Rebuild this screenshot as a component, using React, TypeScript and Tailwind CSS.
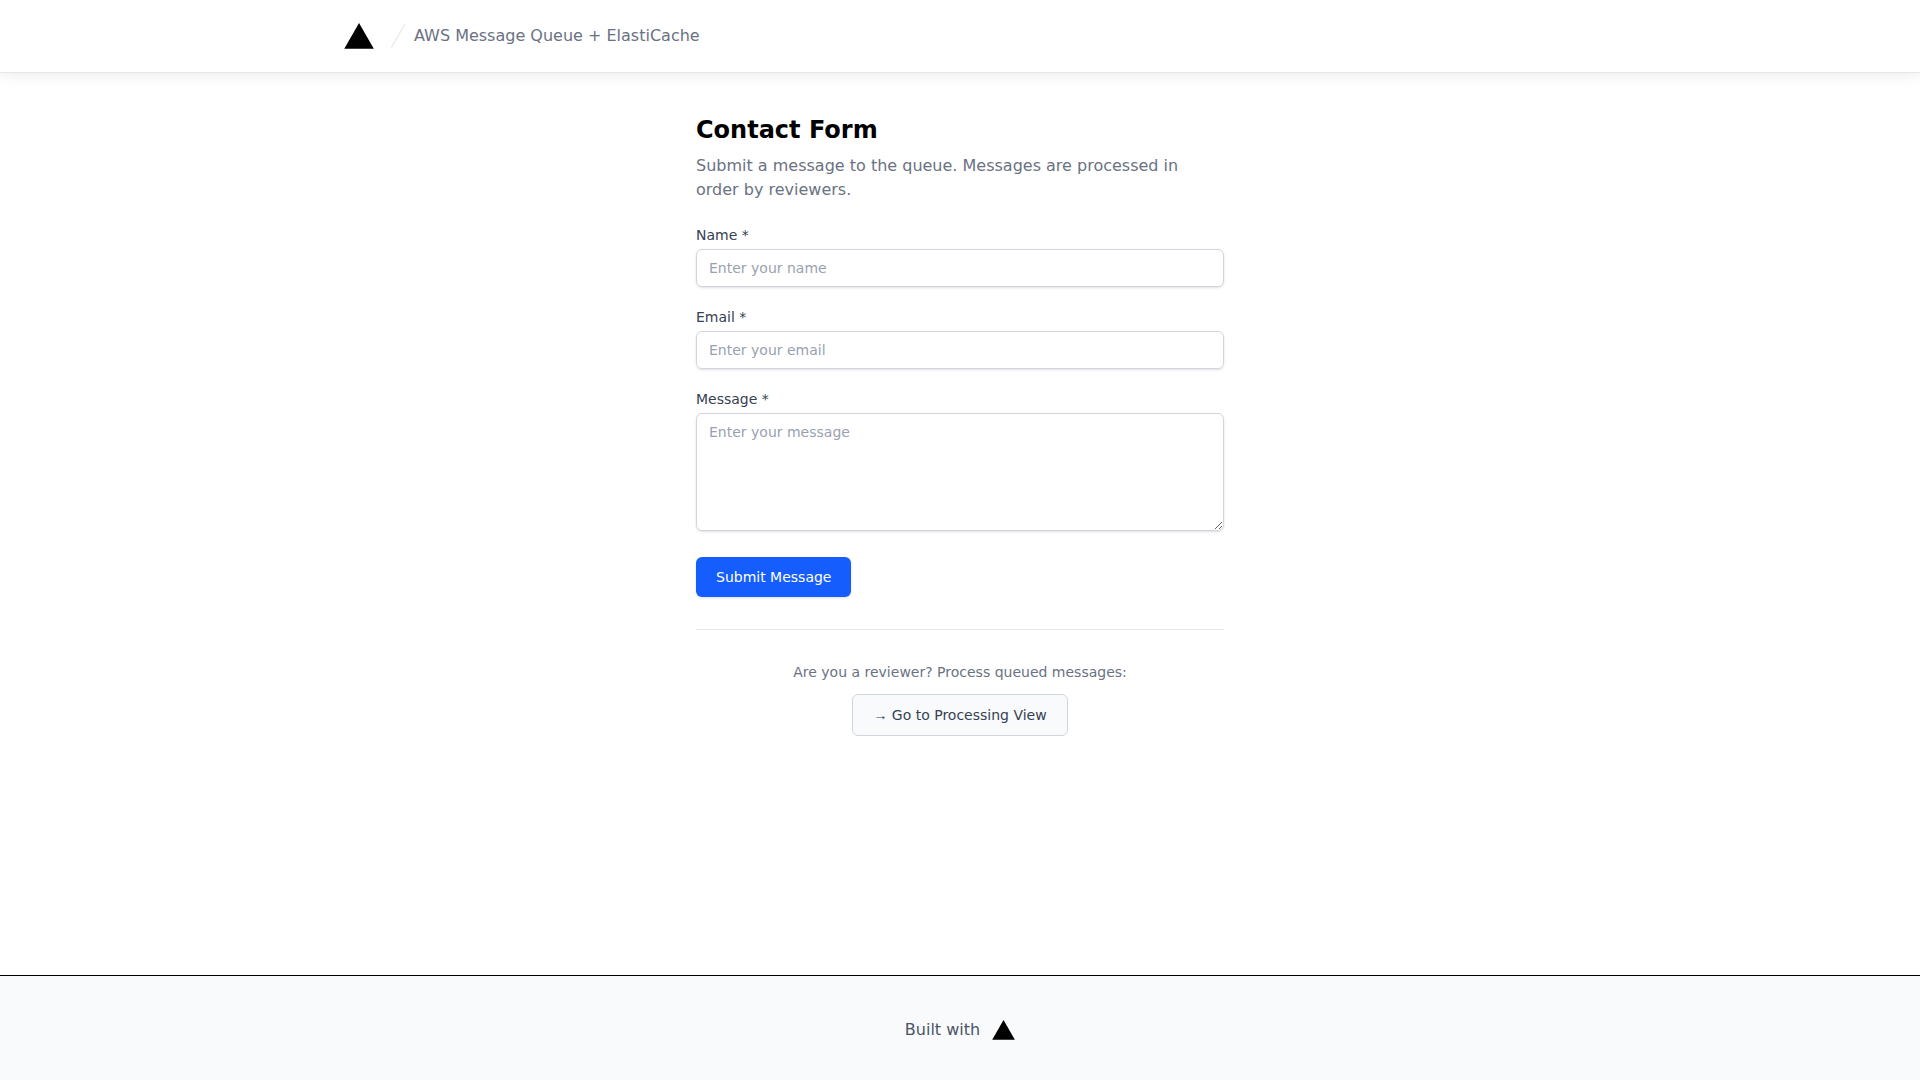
import React, { useState } from "react";

interface LogoProps {
  className?: string;
}

function Logo({ className }: LogoProps) {
  return (
    <svg className={className} viewBox="0 0 75 65" fill="#000" aria-hidden="true">
      <path d="M37.59.25l36.95 64H.64l36.95-64z" />
    </svg>
  );
}

function Navbar() {
  return (
    <header className="border-b border-gray-200 shadow-[0_0_15px_0_rgba(0,0,0,0.1)]">
      <div className="flex items-center max-w-7xl mx-auto px-6 py-5">
        <a href="#" aria-label="Home" className="mr-2">
          <Logo className="w-[30px] h-[26px]" />
        </a>
        <svg
          className="w-8 h-8 text-[#eaeaea]"
          viewBox="0 0 24 24"
          fill="none"
          stroke="currentColor"
          strokeWidth="1"
          strokeLinecap="round"
          strokeLinejoin="round"
          aria-hidden="true"
        >
          <path d="M16.88 3.549L7.12 20.451" />
        </svg>
        <span className="text-gray-500">AWS Message Queue + ElastiCache</span>
      </div>
    </header>
  );
}

function Footer() {
  return (
    <footer className="flex items-center justify-center border-t border-black bg-gray-50 pt-[42px] pb-[38px]">
      <span className="text-gray-600">Built with</span>
      <a href="#" aria-label="Vercel" className="ml-3">
        <Logo className="w-[23px] h-5" />
      </a>
    </footer>
  );
}

const labelClass = "block text-sm font-medium text-gray-700";
const inputClass =
  "mt-1 block w-full rounded-md border border-gray-300 px-3 py-2 text-sm shadow-sm placeholder:text-gray-400 focus:outline-none focus:ring-2 focus:ring-blue-500";

function ContactForm() {
  const [name, setName] = useState("");
  const [email, setEmail] = useState("");
  const [message, setMessage] = useState("");

  const handleSubmit = (e: React.FormEvent) => {
    e.preventDefault();
    setName("");
    setEmail("");
    setMessage("");
  };

  return (
    <form onSubmit={handleSubmit} className="mt-[23px] space-y-5">
      <div>
        <label htmlFor="name" className={labelClass}>
          Name *
        </label>
        <input
          id="name"
          type="text"
          required
          value={name}
          onChange={(e) => setName(e.target.value)}
          className={inputClass}
          placeholder="Enter your name"
        />
      </div>
      <div>
        <label htmlFor="email" className={labelClass}>
          Email *
        </label>
        <input
          id="email"
          type="email"
          required
          value={email}
          onChange={(e) => setEmail(e.target.value)}
          className={inputClass}
          placeholder="Enter your email"
        />
      </div>
      <div className="pb-1.5">
        <label htmlFor="message" className={labelClass}>
          Message *
        </label>
        <textarea
          id="message"
          required
          rows={5}
          value={message}
          onChange={(e) => setMessage(e.target.value)}
          className={inputClass}
          placeholder="Enter your message"
        />
      </div>
      <button
        type="submit"
        className="block rounded-md bg-blue-600 px-5 py-2.5 text-sm font-medium text-white shadow-sm hover:bg-blue-700"
      >
        Submit Message
      </button>
    </form>
  );
}

function App() {
  return (
    <div className="flex flex-col min-h-screen bg-white text-black font-['DejaVu_Sans',sans-serif]">
      <Navbar />
      <main className="flex-1 w-full max-w-xl mx-auto px-6 pt-[41px] pb-10">
        <h1 className="text-2xl font-bold">Contact Form</h1>
        <p className="mt-2 text-gray-500">
          Submit a message to the queue. Messages are processed in order by
          reviewers.
        </p>
        <ContactForm />
        <div className="mt-8 border-t border-gray-200 pt-8 text-center">
          <p className="mb-3 text-sm text-gray-500">
            Are you a reviewer? Process queued messages:
          </p>
          <a
            href="#"
            className="inline-block rounded-md border border-gray-300 bg-gray-50 px-5 py-2.5 text-sm font-medium text-gray-700 hover:bg-gray-100"
          >
            <span className="font-['Liberation_Sans',sans-serif]">→</span> Go to
            Processing View
          </a>
        </div>
      </main>
      <Footer />
    </div>
  );
}

export default App;
